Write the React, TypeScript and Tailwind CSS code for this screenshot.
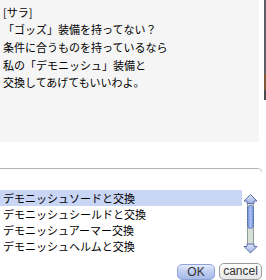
import React from 'react';

const LINES = [
    '[サラ]',
    '「ゴッズ」装備を持ってない？',
    '条件に合うものを持っているなら',
    '私の「デモニッシュ」装備と',
    '交換してあげてもいいわよ。',
];

const ITEMS = [
    'デモニッシュソードと交換',
    'デモニッシュシールドと交換',
    'デモニッシュアーマー交換',
    'デモニッシュヘルムと交換',
];

function ScrollBar() {
    return (
        <svg width="16" height="64" viewBox="0 0 16 64" className="block">
            <defs>
                <linearGradient id="thumb" x1="0" x2="1" y1="0" y2="0">
                    <stop offset="0" stopColor="#6f8fd8" />
                    <stop offset="0.5" stopColor="#a9c0f2" />
                    <stop offset="1" stopColor="#6f8fd8" />
                </linearGradient>
                <linearGradient id="arrow" x1="0" x2="0" y1="0" y2="1">
                    <stop offset="0" stopColor="#dfe6f8" />
                    <stop offset="1" stopColor="#9eafe0" />
                </linearGradient>
            </defs>
            {/* track */}
            <rect x="5.5" y="12.5" width="6" height="41" fill="#d6dfd8" stroke="#8c9a9c" />
            {/* thumb */}
            <rect x="5.5" y="14.5" width="6" height="23" rx="3" fill="url(#thumb)" stroke="#4d68b0" strokeDasharray="2 1" />
            {/* up arrow */}
            <path d="M8.5 3.5 L15 10 L12 10 L12 12.5 L5 12.5 L5 10 L2 10 Z" fill="url(#arrow)" stroke="#5d6fae" />
            {/* down arrow */}
            <path d="M8.5 62 L15 55.5 L12 55.5 L12 53 L5 53 L5 55.5 L2 55.5 Z" fill="url(#arrow)" stroke="#5d6fae" />
        </svg>
    );
}

export default function App() {
    return (
        <div
            className="w-[266px] h-[280px] bg-white flex flex-col overflow-hidden text-black"
            style={{ fontFamily: '"Noto Sans CJK JP", "Noto Sans", sans-serif' }}
        >
            {/* message window */}
            <div className="h-[142px] flex shrink-0">
                <div className="w-[259px] h-full bg-[#f5f5f5] pl-[3px] pt-[3.5px] text-[11px] leading-[17.7px]">
                    {LINES.map((l) => (
                        <div key={l} className="whitespace-nowrap">{l}</div>
                    ))}
                </div>
                <div className="ml-[5px] w-[2px] h-[100px] flex flex-col">
                    <div className="h-[74px] bg-[#5a5e66]" />
                    <div className="h-[16px] bg-[#7a5a3a]" />
                    <div className="h-[10px] bg-[#4a4a50]" />
                </div>
            </div>

            {/* divider */}
            <div className="h-[48px] pt-[26px] shrink-0 flex">
                <div className="w-[258px] h-px bg-[#b4b4b4]" />
                <div className="w-[4px] h-[4px] border-t border-r border-[#d0d0d0] rounded-tr-[4px]" />
            </div>

            {/* choice list */}
            <div className="h-[73px] flex shrink-0">
                <div className="w-[242px] text-[11px] leading-[16px]">
                    {ITEMS.map((item, i) => (
                        <div
                            key={item}
                            className={`h-[16px] pl-[3px] whitespace-nowrap ${i === 0 ? 'bg-[#c8d5f4]' : ''}`}
                        >
                            {item}
                        </div>
                    ))}
                </div>
                <div className="pt-[1px]">
                    <ScrollBar />
                </div>
            </div>

            {/* buttons */}
            <div
                className="h-[17px] flex justify-end items-start gap-[4px] pr-[4px] shrink-0 text-[12px] text-[#333]"
                style={{ fontFamily: '"Liberation Sans", Arial, sans-serif' }}
            >
                <button className="w-[38px] h-[16px] mt-px rounded-[5px] border border-[#8fa3d8] bg-linear-to-b from-[#e4ebfb] via-[#bccbf0] to-[#a6b9e8] leading-[14px]">
                    OK
                </button>
                <button className="w-[43px] h-[17px] rounded-[5px] border border-[#9a9a9a] bg-linear-to-b from-white to-[#e6e6e6] leading-[15px]">
                    cancel
                </button>
            </div>
        </div>
    );
}
